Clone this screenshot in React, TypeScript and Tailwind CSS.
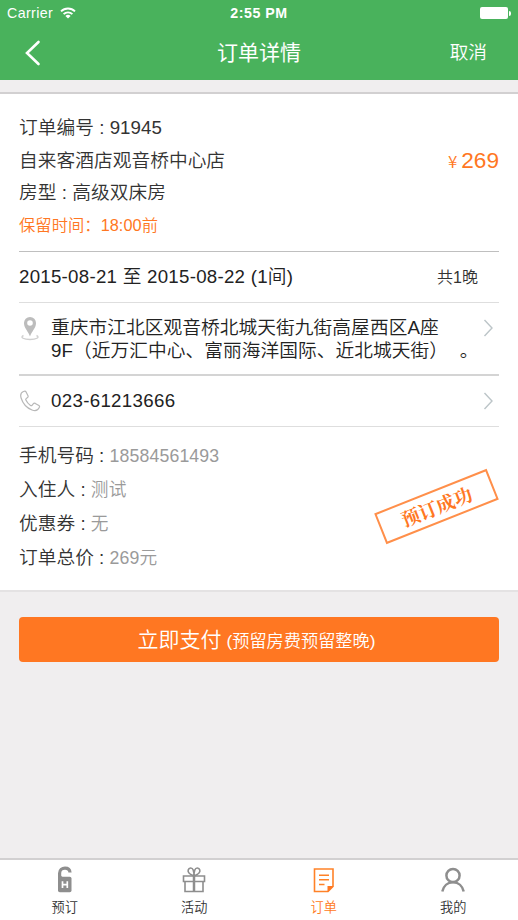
import type { ReactNode } from 'react'

interface TabProps {
  label: string
  active?: boolean
  children: ReactNode
}

function Tab({ label, active, children }: TabProps) {
  return (
    <div className="flex-1 flex flex-col items-center pt-[5px]">
      <svg width="30" height="30" viewBox="0 0 30 30" fill="none">
        {children}
      </svg>
      <span className={`text-[13.2px] leading-5 mt-[3px] ${active ? 'text-[#ff7a22]' : 'text-[#333]'}`}>
        {label}
      </span>
    </div>
  )
}

function ChevronRight() {
  return (
    <svg width="11" height="18" viewBox="0 0 11 18" fill="none" stroke="#bcc5c8" strokeWidth="1.4" className="shrink-0">
      <path d="M1.5 1 9 9 1.5 17" />
    </svg>
  )
}

function StatusBar() {
  return (
    <div className="h-[26px] flex items-center justify-between pl-[7px] pr-[7px]">
      <div className="flex flex-1 items-center gap-[7px]">
        <span className="pt-px text-[14.2px] tracking-[0.4px]">Carrier</span>
        <svg width="16" height="12" viewBox="0 0 16 12" fill="none" stroke="white" strokeWidth="1.9">
          <path d="M1 4.4a10 10 0 0 1 14 0" />
          <path d="M3.6 7.2a6.2 6.2 0 0 1 8.8 0" />
          <path d="M8 11.6 5.4 9a3.7 3.7 0 0 1 5.2 0z" fill="white" stroke="none" />
        </svg>
      </div>
      <span className="pt-px text-[14.2px] font-bold tracking-[0.55px]">2:55 PM</span>
      <div className="flex flex-1 items-center justify-end gap-px">
        <span className="w-7 h-3 bg-white rounded-[2px]" />
        <span className="w-[2px] h-[5px] bg-white rounded-r-full" />
      </div>
    </div>
  )
}

const details = [
  { label: '手机号码', value: '18584561493' },
  { label: '入住人', value: '测试' },
  { label: '优惠券', value: '无' },
  { label: '订单总价', value: '269元' },
]

export default function App() {
  return (
    <div className="w-[518px] h-[920px] flex flex-col overflow-hidden bg-[#f0eeef] text-[#333] font-[350] font-['Liberation_Sans','Noto_Sans_CJK_SC',sans-serif]">
      {/* Header */}
      <header className="h-20 shrink-0 bg-[#49b25c] text-white">
        <StatusBar />
        <div className="h-[54px] flex items-center px-[25px]">
          <div className="flex-1">
            <svg width="16" height="26" viewBox="0 0 16 26" fill="none" stroke="white" strokeWidth="2.6" strokeLinecap="round">
              <path d="M13.5 2 2 13l11.5 11" />
            </svg>
          </div>
          <h1 className="text-[21px] font-normal">订单详情</h1>
          <div className="flex-1 flex justify-end">
            <span className="mr-[6px] pt-px text-[18.7px]">取消</span>
          </div>
        </div>
      </header>

      {/* Order card */}
      <main className="mt-3 h-[500px] shrink-0 bg-white border-t-2 border-b-2 border-t-[#d2d0d1] border-b-[#e4e2e3] px-[19px]">
        <section className="h-[158px] border-b border-[#bfbfbf] pt-[17px] text-[18.7px]">
          <p className="h-[33px] leading-[33px] tracking-[0.05px]">订单编号 : 91945</p>
          <div className="h-[33px] leading-[33px] flex justify-between">
            <p className="tracking-[0.05px]">自来客酒店观音桥中心店</p>
            <p className="flex items-center gap-1 text-[#ff7722]">
              <span className="text-[17px] leading-[31px] font-['Noto_Sans_CJK_SC',sans-serif]">¥</span>
              <span className="text-[22.6px]">269</span>
            </p>
          </div>
          <p className="h-8 leading-8 tracking-[0.05px]">房型 : 高级双床房</p>
          <p className="h-[33px] leading-[33px] text-[16.3px] tracking-[0.05px] text-[#ff7722]">保留时间：18:00前</p>
        </section>

        <section className="h-[51px] border-b border-[#dedede] flex items-center pt-px pr-[21px] justify-between">
          <span className="text-[18.7px] tracking-[0.26px] text-[#222]">2015-08-21 至 2015-08-22 (1间)</span>
          <span className="text-[16px]">共1晚</span>
        </section>

        <section className="h-[73px] border-b-2 border-[#d4d4d4] flex pt-[14px] pr-[5px]">
          <svg width="22" height="24" viewBox="0 0 22 24" fill="none" className="shrink-0">
            <path d="M4.5 18.5c-4 2 .5 4 6.5 4s10.5-2 6.5-4" stroke="#d0d0d0" strokeWidth="1.4" />
            <path d="M11 0a6 6 0 0 0-6 6.2C5 11 9.500 14.500 11 19.500 12.500 14.500 17 11 17 6.200A6 6 0 0 0 11 0zm0 3.200a2.800 2.800 0 1 1 0 5.600 2.800 2.800 0 0 1 0-5.600z" fill="#bcbcbc" fillRule="evenodd" />
          </svg>
          <p className="ml-[10px] -mt-px flex-1 whitespace-nowrap text-[18.7px] leading-[23px] tracking-[0.07px] text-[#222]">
            重庆市江北区观音桥北城天街九街高屋西区A座
            <br />
            9F（近万汇中心、富丽海洋国际、近北城天街）
            <span className="ml-[21px]">。</span>
          </p>
          <div className="pt-[2px]">
            <ChevronRight />
          </div>
        </section>

        <section className="h-[51px] border-b border-[#dedede] flex items-center pr-[5px]">
          <svg width="22" height="22" viewBox="0 0 22 22" fill="none" stroke="#b8b8b8" strokeWidth="1.2" strokeLinejoin="round" className="shrink-0">
            <path d="M4.500 1.500C2.500 2.300 1 4.300 2.100 8c1.700 5.500 5.800 10 10.900 12 3.600 1.400 6.300-.2 7.400-2.700.3-.8.1-1.400-.5-1.800l-3.600-2.100c-.8-.4-1.500-.3-2.100.4l-1.200 1.500c-.4.5-.9.5-1.500.1-2.100-1.400-3.600-3.200-4.600-5.400-.3-.6-.2-1 .3-1.400l1.300-1c.6-.5.8-1.100.5-1.800L7.100 2.100c-.4-1-1.300-1.100-2.600-.6z" />
          </svg>
          <span className="ml-[10px] flex-1 text-[18.7px] tracking-[0.32px] text-[#222]">023-61213666</span>
          <ChevronRight />
        </section>

        <section className="relative pt-[12px]">
          {details.map((item) => (
            <p key={item.label} className="h-[34px] leading-[34px] text-[18.7px] tracking-[0.03px] whitespace-pre">
              {item.label} : <span className="text-[17.7px] tracking-[0.14px] text-[#9a9a9a]">{item.value}</span>
            </p>
          ))}
          {/* Stamp */}
          <div className="absolute left-[357px] top-[63px] w-[121px] h-[33px] flex items-center justify-center border-2 border-[#ff8f4a] -rotate-[21.7deg] text-[18.7px] font-bold text-[#ff7722] font-['Noto_Serif_CJK_SC','Noto_Sans_CJK_SC',serif]">
            预订成功
          </div>
        </section>
      </main>

      <button className="mx-[19px] mt-[25px] pr-[5px] h-[45px] shrink-0 rounded-[4px] bg-[#ff7722] text-white">
        <span className="text-[21px]">立即支付</span>
        <span className="ml-[5px] text-[17.2px]">(预留房费预留整晚)</span>
      </button>

      {/* Tab bar */}
      <nav className="mt-auto h-[62px] shrink-0 flex bg-white border-t-2 border-[#d2d0d1]">
        <Tab label="预订">
          <rect x="8" y="11.8" width="13.5" height="15.5" rx="1.8" fill="#8e8e8e" />
          <path d="M9.600 14V8.200C9.600 5 12 3.200 15 3.200c2.800 0 4.800 1.500 5 4.300" stroke="#8e8e8e" strokeWidth="3.200" />
          <path d="M10.500 8.500c0 2.500 1.500 4 4.500 4h-4.500z" fill="#8e8e8e" />
          <path d="M12.500 16.200v6.800M17.300 16.200v6.800M12.500 19.600h5" stroke="white" strokeWidth="1.700" />
        </Tab>
        <Tab label="活动">
          <g stroke="#8e8e8e" strokeWidth="1.6">
            <path d="M4.500 11h21v5.500h-21zM6 16.500h18v10H6z" />
            <path d="M15 11v15.500" strokeWidth="2.500" />
            <path d="M15 11C11 9.500 8.500 7.500 9.200 5s4-2.800 5 0c.7 2 .8 4 .8 6zM15 11c4-1.500 6.500-3.500 5.800-6s-4-2.800-5 0c-.7 2-.8 4-.8 6z" />
          </g>
        </Tab>
        <Tab label="订单" active>
          <path d="M5.500 4H24v17.500L19 26.500H5.500z" stroke="#ff8228" strokeWidth="1.6" />
          <path d="M18.500 27v-6h6z" fill="#ff7722" />
          <path d="M10 10.200h10M10 14.700h10M10 19.500h5.500" stroke="#ff8228" strokeWidth="1.5" />
        </Tab>
        <Tab label="我的">
          <g stroke="#8e8e8e" strokeWidth="2.5">
            <circle cx="15" cy="10.500" r="6.600" />
            <path d="M4.300 26.500C5.500 21 9.500 17.300 15 17.300s9.500 3.700 10.700 9.200" />
          </g>
        </Tab>
      </nav>
    </div>
  )
}
